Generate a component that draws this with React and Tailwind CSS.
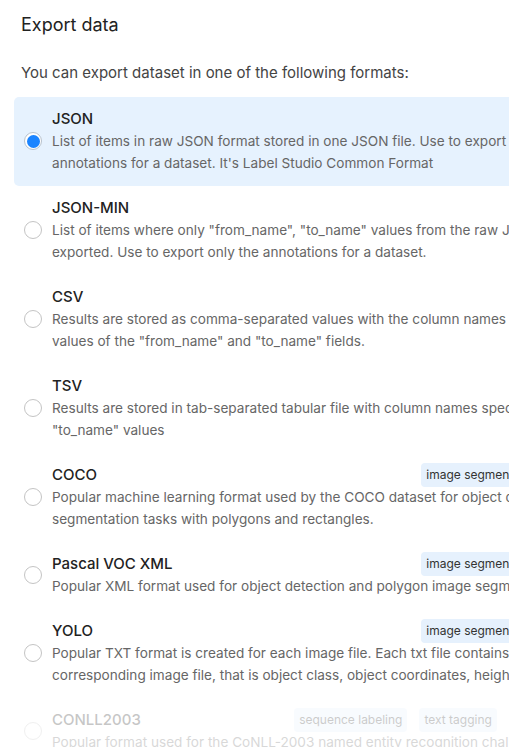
import React from "react";

const formats = [
  {
    title: "JSON",
    lines: [
      "List of items in raw JSON format stored in one JSON file. Use to export both the data and the",
      "annotations for a dataset. It's Label Studio Common Format",
    ],
    selected: true,
  },
  {
    title: "JSON-MIN",
    lines: [
      'List of items where only "from_name", "to_name" values from the raw JSON format are',
      "exported. Use to export only the annotations for a dataset.",
    ],
  },
  {
    title: "CSV",
    lines: [
      "Results are stored as comma-separated values with the column names specified by the",
      'values of the "from_name" and "to_name" fields.',
    ],
  },
  {
    title: "TSV",
    lines: [
      'Results are stored in tab-separated tabular file with column names specified by "from_name"',
      '"to_name" values',
    ],
  },
  {
    title: "COCO",
    tags: ["image segmentation", "object detection"],
    lines: [
      "Popular machine learning format used by the COCO dataset for object detection and image",
      "segmentation tasks with polygons and rectangles.",
    ],
  },
  {
    title: "Pascal VOC XML",
    tags: ["image segmentation", "object detection"],
    lines: ["Popular XML format used for object detection and polygon image segmentation tasks."],
  },
  {
    title: "YOLO",
    tags: ["image segmentation", "object detection"],
    lines: [
      "Popular TXT format is created for each image file. Each txt file contains annotations for the",
      "corresponding image file, that is object class, object coordinates, height & width.",
    ],
  },
  {
    title: "CONLL2003",
    tags: ["sequence labeling", "text tagging", "named entity recognition"],
    lines: ["Popular format used for the CoNLL-2003 named entity recognition challenge."],
    disabled: true,
  },
];

function Radio({ checked }) {
  if (checked) {
    return (
      <div className="w-[18px] h-[18px] shrink-0 rounded-full border border-[#b8c2cc] bg-white flex items-center justify-center">
        <div className="w-[13px] h-[13px] rounded-full bg-[#1a84ff]" />
      </div>
    );
  }
  return <div className="w-[18px] h-[18px] shrink-0 rounded-full border border-[#c4c4c4] bg-white" />;
}

export default function App() {
  return (
    <div
      className="w-[509px] h-[747px] overflow-hidden bg-white"
      style={{ fontFamily: "Inter, 'Noto Sans', sans-serif" }}
    >
      <div className="w-[700px]">
        <div className="pl-[21px] pt-[12px] text-[18px] leading-[26px] text-[#222]">Export data</div>
        <div className="pl-[21px] mt-[23px] text-[15px] leading-[24px] text-[#444]">
          You can export dataset in one of the following formats:
        </div>
        <div className="mt-[12px] ml-[14px] w-[658px] flex flex-col">
          {formats.map((f) => (
            <div
              key={f.title}
              className={
                "flex items-center gap-[10px] pl-[10px] pr-[12px] pt-[11px] pb-[12px] rounded-[5px] " +
                (f.selected ? "bg-[#e6f2fe] " : "") +
                (f.disabled ? "opacity-25" : "")
              }
            >
              <Radio checked={f.selected} />
              <div className="flex-1 flex flex-col">
                <div className="h-[22px] flex items-center justify-between">
                  <span className="text-[15px] font-medium text-[#222]">{f.title}</span>
                  {f.tags && (
                    <div className="flex gap-[12px]">
                      {f.tags.map((t) => (
                        <span
                          key={t}
                          className="h-[24px] px-[5px] rounded-[4px] bg-[#e6f1fd] text-[12px] leading-[24px] text-[#333] whitespace-nowrap"
                        >
                          {t}
                        </span>
                      ))}
                    </div>
                  )}
                </div>
                {f.lines.map((l, i) => (
                  <div key={i} className="text-[13.6px] leading-[22px] text-[#666] whitespace-nowrap">
                    {l}
                  </div>
                ))}
              </div>
            </div>
          ))}
        </div>
      </div>
    </div>
  );
}
